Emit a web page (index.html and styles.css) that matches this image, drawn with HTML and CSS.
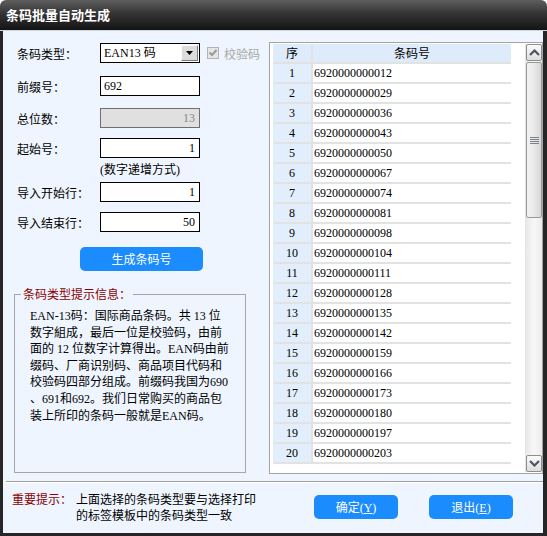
FILE: index.html
```html
<!DOCTYPE html>
<html lang="zh-CN">
<head>
<meta charset="utf-8">
<title>条码批量自动生成</title>
<link rel="stylesheet" href="styles.css">
</head>
<body>
<div class="window">
  <div class="titlebar">条码批量自动生成</div>
  <div class="body">
    <div class="main">
      <div class="left">
        <div class="row">
          <span class="label">条码类型：</span>
          <div class="combo">
            <span class="combo-val">EAN13 码</span>
            <span class="combo-btn"><svg width="9" height="5" viewBox="0 0 9 5"><path d="M1 0h7L4.5 4z" fill="#000"/></svg></span>
          </div>
          <span class="chk">
            <span class="chk-box"><svg width="10" height="10" viewBox="0 0 10 10"><path d="M1.5 4.5l2.5 2.5 4.5-5" fill="none" stroke="#9a9a9a" stroke-width="2"/></svg></span>
            <span class="chk-label">校验码</span>
          </span>
        </div>
        <div class="row r2">
          <span class="label">前缀号：</span>
          <div class="input">692</div>
        </div>
        <div class="row r3">
          <span class="label">总位数：</span>
          <div class="input right disabled">13</div>
        </div>
        <div class="row r4">
          <span class="label">起始号：</span>
          <div class="input right">1</div>
        </div>
        <div class="hint">(数字递增方式)</div>
        <div class="row">
          <span class="label">导入开始行：</span>
          <div class="input right">1</div>
        </div>
        <div class="row r6">
          <span class="label">导入结束行：</span>
          <div class="input right">50</div>
        </div>
        <div class="gen-btn">生成条码号</div>
        <fieldset class="group">
          <legend>条码类型提示信息：</legend>
          <div class="info"><span class="lat">EAN-13</span>码<span class="p pc">：</span>国际商品条码<span class="p">。</span>共<span class="lat"> 13 </span>位<br>数字組成<span class="p">，</span>最后一位是校验码<span class="p">，</span>由前<br>面的<span class="lat"> 12 </span>位数字计算得出<span class="p">。</span><span class="lat">EAN</span>码由前<br>缀码、厂商识别码、商品项目代码和<br>校验码四部分组成<span class="p">。</span>前缀码我国为<span class="lat">690</span><br>、<span class="lat">691</span>和<span class="lat">692</span><span class="p">。</span>我们日常购买的商品包<br>装上所印的条码一般就是<span class="lat">EAN</span>码<span class="p">。</span></div>
        </fieldset>
      </div>
      <div class="grid-panel">
        <div class="grid">
          <div class="hd">序</div><div class="hd">条码号</div>
          <div class="no">1</div><div class="code">6920000000012</div>
          <div class="no">2</div><div class="code">6920000000029</div>
          <div class="no">3</div><div class="code">6920000000036</div>
          <div class="no">4</div><div class="code">6920000000043</div>
          <div class="no">5</div><div class="code">6920000000050</div>
          <div class="no">6</div><div class="code">6920000000067</div>
          <div class="no">7</div><div class="code">6920000000074</div>
          <div class="no">8</div><div class="code">6920000000081</div>
          <div class="no">9</div><div class="code">6920000000098</div>
          <div class="no">10</div><div class="code">6920000000104</div>
          <div class="no">11</div><div class="code">6920000000111</div>
          <div class="no">12</div><div class="code">6920000000128</div>
          <div class="no">13</div><div class="code">6920000000135</div>
          <div class="no">14</div><div class="code">6920000000142</div>
          <div class="no">15</div><div class="code">6920000000159</div>
          <div class="no">16</div><div class="code">6920000000166</div>
          <div class="no">17</div><div class="code">6920000000173</div>
          <div class="no">18</div><div class="code">6920000000180</div>
          <div class="no">19</div><div class="code">6920000000197</div>
          <div class="no">20</div><div class="code">6920000000203</div>
        </div>
        <div class="scrollbar">
          <div class="sb-btn"><svg width="11" height="7" viewBox="0 0 11 7"><path d="M1 6l4.5-4.5L10 6" fill="none" stroke="#4d5566" stroke-width="2.2"/></svg></div>
          <div class="sb-thumb"><svg width="9" height="7" viewBox="0 0 9 7"><path d="M0 .5h9M0 2.5h9M0 4.5h9M0 6.5h9" stroke="#7a808c" stroke-width="1"/></svg></div>
          <div class="sb-track"></div>
          <div class="sb-btn"><svg width="11" height="7" viewBox="0 0 11 7"><path d="M1 1l4.5 4.5L10 1" fill="none" stroke="#4d5566" stroke-width="2.2"/></svg></div>
        </div>
      </div>
    </div>
    <div class="sep"></div>
    <div class="footer">
      <span class="tip-label">重要提示：</span>
      <span class="tip-text">上面选择的条码类型要与选择打印<br>的标签模板中的条码类型一致</span>
      <div class="btn">确定<span class="acc">(<u>Y</u>)</span></div>
      <div class="btn btn2">退出<span class="acc">(<u>E</u>)</span></div>
    </div>
  </div>
</div>
</body>
</html>
```

FILE: styles.css
```css
* { box-sizing: border-box; }
html, body { margin: 0; padding: 0; }
body {
  width: 547px;
  height: 536px;
  overflow: hidden;
  background: #ffffff;
  font-family: "Liberation Serif", "Noto Sans CJK SC", serif;
  font-size: 12px;
  color: #000;
}
.window {
  width: 547px;
  height: 536px;
  display: flex;
  flex-direction: column;
}
.titlebar {
  height: 31px;
  flex: none;
  background: linear-gradient(#5e5e5e, #343434 45%, #141414);
  border-radius: 6px 6px 0 0;
  border-bottom: 1px solid #cfd6de;
  color: #fff;
  font-family: "Noto Sans CJK SC", sans-serif;
  font-weight: bold;
  font-size: 13px;
  line-height: 30px;
  padding-left: 6px;
}
.body {
  flex: 1;
  background: #eef5fe;
  border-style: solid;
  border-color: #262626;
  border-width: 0 4px 3px 3px;
  display: flex;
  flex-direction: column;
}
.main {
  display: flex;
  height: 450px;
  flex: none;
}
.left {
  width: 266px;
  padding-top: 12px;
}
.row {
  display: flex;
  align-items: center;
  height: 20px;
  padding-left: 14px;
}
.r2 { margin-top: 13px; }
.r3 { margin-top: 12px; }
.r4 { margin-top: 10px; }
.r6 { margin-top: 10px; }
.label {
  width: 83px;
  flex: none;
  font-family: "Noto Sans CJK SC", sans-serif;
  font-size: 12px;
}
.input {
  width: 100px;
  height: 20px;
  border: 1px solid #000;
  background: #fff;
  padding: 0 3px;
  line-height: 18px;
  font-size: 12px;
}
.input.right { text-align: right; padding-right: 4px; }
.input.disabled { background: #e0e0e0; color: #8a8a8a; border-color: #6e6e6e; }
.combo {
  width: 100px;
  height: 20px;
  border: 1px solid #000;
  background: #fff;
  display: flex;
  align-items: center;
  justify-content: space-between;
  padding: 0 1px 0 3px;
}
.combo-val { font-size: 12px; line-height: 18px; }
.combo-btn {
  width: 17px;
  height: 16px;
  background: #dcdcdc;
  border-style: solid;
  border-width: 1px;
  border-color: #fafafa #7c7c7c #7c7c7c #fafafa;
  display: flex;
  align-items: center;
  justify-content: center;
}
.chk {
  display: flex;
  align-items: center;
  margin-left: 7px;
}
.chk-box {
  width: 12px;
  height: 12px;
  border: 1px solid #b4b4b4;
  background: #e6e6e6;
  display: flex;
  align-items: center;
  justify-content: center;
}
.chk-label {
  margin-left: 5px;
  color: #a8a8a8;
  font-family: "Noto Sans CJK SC", sans-serif;
  font-size: 12px;
}
.hint {
  height: 24px;
  line-height: 24px;
  padding-left: 97px;
  font-size: 12px;
}
.gen-btn {
  margin: 15px 0 0 77px;
  width: 123px;
  height: 24px;
  border-radius: 5px;
  background: #1b8cfd;
  color: #fff;
  text-align: center;
  line-height: 24px;
  font-family: "Noto Sans CJK SC", sans-serif;
  font-size: 12px;
}
.group {
  margin: 15px 0 0 11px;
  width: 232px;
  height: 187px;
  border: 1px solid #a6a6a6;
  padding: 5px 0 0 6px;
}
.group legend {
  padding: 0 2px;
  color: #8b0000;
  font-family: "Noto Sans CJK SC", sans-serif;
  font-size: 12px;
  line-height: 16px;
}
.info {
  margin-left: 9px;
  line-height: 16px;
  font-size: 12px;
  white-space: nowrap;
  font-family: "Noto Sans CJK SC", sans-serif;
}
.lat { font-family: "Liberation Serif", serif; }
.p {
  display: inline-block;
  width: 12px;
  text-align: left;
}
.pc { text-align: center; }
.grid-panel {
  margin-top: 11px;
  width: 274px;
  height: 432px;
  border: 1px solid #a4a4a4;
  background: #fff;
  display: flex;
  padding: 1px 0 1px 3px;
}
.grid {
  width: 238px;
  height: 420px;
  display: grid;
  grid-template-columns: 38px 198px;
  grid-auto-rows: 18px;
  gap: 2px;
  align-content: start;
  background: #e2e2e2;
  padding-bottom: 2px;
}
.hd {
  background: #ddebfb;
  text-align: center;
  line-height: 18px;
  font-family: "Noto Sans CJK SC", sans-serif;
  font-size: 12px;
}
.no {
  background: #e2eefc;
  text-align: center;
  line-height: 18px;
}
.code {
  background: #fff;
  line-height: 18px;
  padding-left: 1px;
}
.scrollbar {
  margin-left: 14px;
  width: 17px;
  height: 428px;
  display: flex;
  flex-direction: column;
  background: linear-gradient(90deg, #e9e9e9, #f7f7f7 50%, #ececec);
  border-left: 1px solid #e4e4e4;
}
.sb-btn {
  height: 17px;
  flex: none;
  border: 1px solid #8e8e8e;
  border-radius: 2px;
  background: linear-gradient(#fbfbfb, #dedede);
  display: flex;
  align-items: center;
  justify-content: center;
}
.sb-thumb {
  margin-top: 1px;
  height: 156px;
  flex: none;
  border: 1px solid #9a9a9a;
  border-radius: 2px;
  background: linear-gradient(90deg, #f2f2f2, #e9e9e9 50%, #d6d6d6);
  display: flex;
  align-items: center;
  justify-content: center;
}
.sb-track { flex: 1; }
.sep {
  margin-left: 3px;
  height: 2px;
  border-top: 1px solid #a0a0a0;
  background: #fff;
  flex: none;
}
.footer {
  flex: 1;
  display: flex;
  align-items: flex-start;
  padding: 8px 0 0 9px;
  font-family: "Noto Sans CJK SC", sans-serif;
  font-size: 12px;
  line-height: 16px;
}
.tip-label { width: 64px; flex: none; color: #8b0000; }
.tip-text { width: 238px; flex: none; }
.btn {
  margin-top: 4px;
  width: 84px;
  height: 24px;
  border-radius: 5px;
  background: #1b8cfd;
  color: #fff;
  text-align: center;
  line-height: 24px;
  flex: none;
}
.btn2 { margin-left: 31px; }
.acc { font-family: "Liberation Serif", serif; font-size: 12px; }
```
